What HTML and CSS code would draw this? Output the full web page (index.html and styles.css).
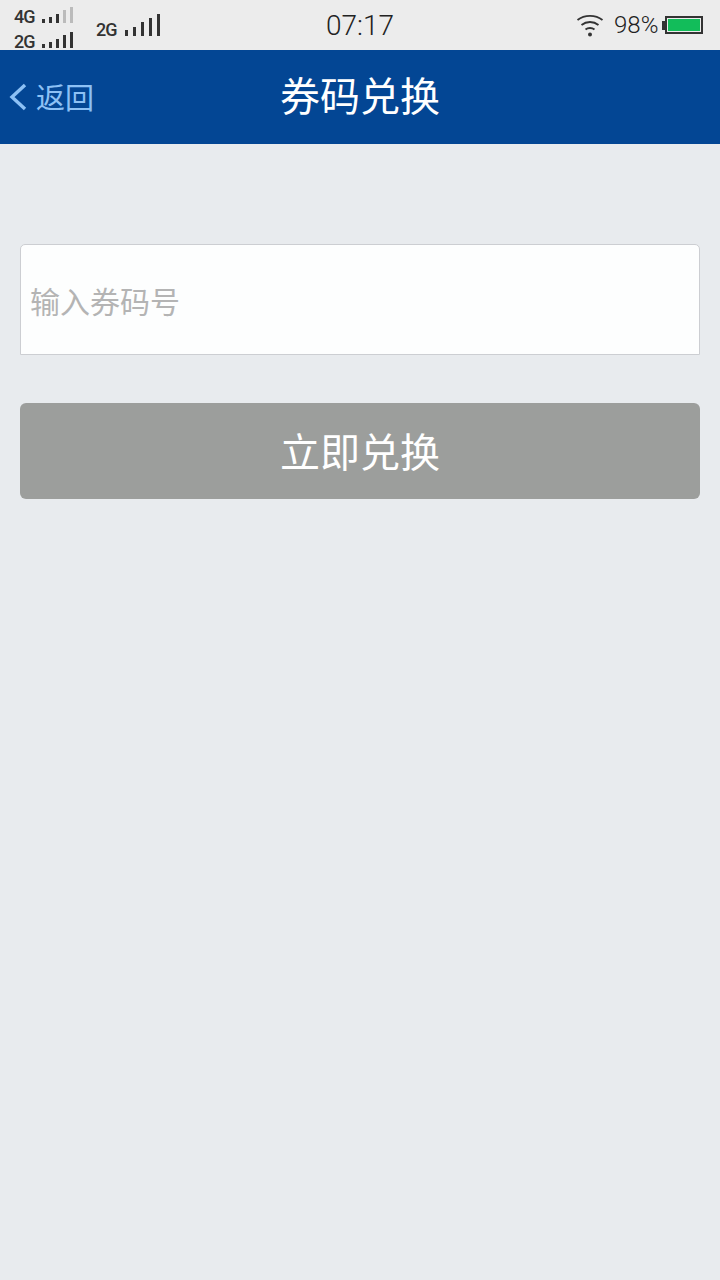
FILE: index.html
```html
<!DOCTYPE html>
<html lang="zh">
<head>
    <meta charset="UTF-8">
    <meta name="viewport" content="width=device-width, initial-scale=1.0">
    <title>券码兑换</title>
    <link rel="stylesheet" href="styles.css">
</head>
<body>
    <div class="status-bar">
        <div class="sim-stack">
            <div class="sim sim-top">
                <span class="net">4G</span>
                <svg width="32" height="18" viewBox="0 0 32 18">
                    <rect x="0" y="13" width="3" height="4" fill="#333"/>
                    <rect x="7" y="11" width="3" height="6" fill="#333"/>
                    <rect x="14" y="8" width="3" height="9" fill="#333"/>
                    <rect x="21" y="4" width="3" height="13" fill="#bbb"/>
                    <rect x="28" y="1" width="3" height="16" fill="#bbb"/>
                </svg>
            </div>
            <div class="sim sim-bottom">
                <span class="net">2G</span>
                <svg width="32" height="18" viewBox="0 0 32 18">
                    <rect x="0" y="13" width="3" height="4" fill="#333"/>
                    <rect x="7" y="11" width="3" height="6" fill="#333"/>
                    <rect x="14" y="8" width="3" height="9" fill="#333"/>
                    <rect x="21" y="4" width="3" height="13" fill="#333"/>
                    <rect x="28" y="1" width="3" height="16" fill="#333"/>
                </svg>
            </div>
        </div>
        <div class="sim sim-single">
            <span class="net">2G</span>
            <svg width="36" height="24" viewBox="0 0 36 24">
                <rect x="0" y="17" width="3" height="6" fill="#333"/>
                <rect x="8" y="14" width="3" height="9" fill="#333"/>
                <rect x="16" y="9" width="3" height="14" fill="#333"/>
                <rect x="24" y="5" width="3" height="18" fill="#333"/>
                <rect x="32" y="1" width="3" height="22" fill="#333"/>
            </svg>
        </div>
        <div class="clock">07:17</div>
        <div class="status-right">
            <svg class="wifi" width="28" height="24" viewBox="0 0 28 24" fill="none" stroke="#333" stroke-width="1.8">
                <path d="M1.5 7 C8.5 1.5 19.5 1.5 26.5 7"/>
                <path d="M5.5 12 C10.5 8 17.5 8 22.5 12"/>
                <path d="M9.5 16.5 C12 14.5 16 14.5 18.5 16.5"/>
                <circle cx="14" cy="21.5" r="2" fill="#333" stroke="none"/>
            </svg>
            <span class="percent">98%</span>
            <div class="battery">
                <div class="battery-cap"></div>
                <div class="battery-body"><div class="battery-level"></div></div>
            </div>
        </div>
    </div>

    <div class="nav-bar">
        <div class="back">
            <svg width="18" height="28" viewBox="0 0 18 28" fill="none" stroke="#8dc1f5" stroke-width="3.4">
                <path d="M16 2 L3 14 L16 26"/>
            </svg>
            <span class="back-label">返回</span>
        </div>
        <h1 class="nav-title">券码兑换</h1>
    </div>

    <div class="content">
        <div class="code-input">输入券码号</div>
        <button class="redeem">立即兑换</button>
    </div>
</body>
</html>
```

FILE: styles.css
```css
body {
    margin: 0;
    height: 1280px;
    overflow: hidden;
    background-color: #e8ebee;
    font-family: "Liberation Sans", "Noto Sans CJK SC", sans-serif;
}

.status-bar {
    height: 50px;
    background-color: #ececec;
    display: flex;
    align-items: center;
    color: #333;
    position: relative;
    overflow: hidden;
}

.sim-stack {
    margin-left: 14px;
    width: 60px;
    display: flex;
    flex-direction: column;
    gap: 7px;
    margin-top: 8px;
}

.sim {
    display: flex;
    align-items: flex-end;
    height: 18px;
}

.sim svg {
    display: block;
    margin-left: 7px;
    margin-bottom: 2px;
}

.net {
    font-family: "Roboto", sans-serif;
    font-size: 18px;
    font-weight: 500;
    line-height: 18px;
    width: 21px;
    letter-spacing: -1px;
}

.sim-single {
    margin-left: 22px;
    height: 24px;
    margin-top: 3px;
}

.sim-single svg {
    margin-left: 8px;
}

.clock {
    position: absolute;
    left: 0;
    right: 0;
    top: 9px;
    text-align: center;
    font-family: "Roboto", sans-serif;
    font-size: 28px;
    font-weight: 300;
    line-height: 34px;
    color: #222;
}

.status-right {
    margin-left: auto;
    margin-right: 17px;
    display: flex;
    align-items: center;
}

.wifi {
    display: block;
    margin-right: 10px;
}

.percent {
    font-family: "Roboto", sans-serif;
    font-size: 24px;
    font-weight: 300;
    margin-right: 4px;
    color: #222;
    width: 44px;
}

.battery {
    display: flex;
    align-items: center;
}

.battery-cap {
    width: 3px;
    height: 9px;
    background-color: #333;
}

.battery-body {
    width: 32px;
    height: 12px;
    border: 2px solid #333;
    padding: 1px;
}

.battery-level {
    height: 100%;
    background-color: #12bd5a;
}

.nav-bar {
    height: 94px;
    background-color: #034694;
    display: flex;
    align-items: center;
    position: relative;
}

.back {
    display: flex;
    align-items: center;
    margin-left: 9px;
    gap: 9px;
    color: #8dc1f5;
    font-size: 29px;
}

.back svg {
    display: block;
}

.back-label {
    margin-top: -3px;
}

.nav-title {
    position: absolute;
    left: 0;
    right: 0;
    top: 23px;
    margin: 0;
    text-align: center;
    color: #fff;
    font-size: 40px;
    font-weight: 400;
    line-height: 48px;
}

.content {
    padding: 100px 20px 0;
}

.code-input {
    height: 109px;
    background-color: #fdfefe;
    border: 1px solid #ccced2;
    border-radius: 5px 5px 0 0;
    padding-left: 9px;
    display: flex;
    align-items: center;
    color: #b4b4b4;
    font-size: 30px;
}

.redeem {
    display: block;
    width: 100%;
    height: 96px;
    margin-top: 48px;
    padding: 0 0 2px;
    border: none;
    border-radius: 6px;
    background-color: #9c9e9c;
    color: #fff;
    font-family: inherit;
    font-size: 40px;
}
```
